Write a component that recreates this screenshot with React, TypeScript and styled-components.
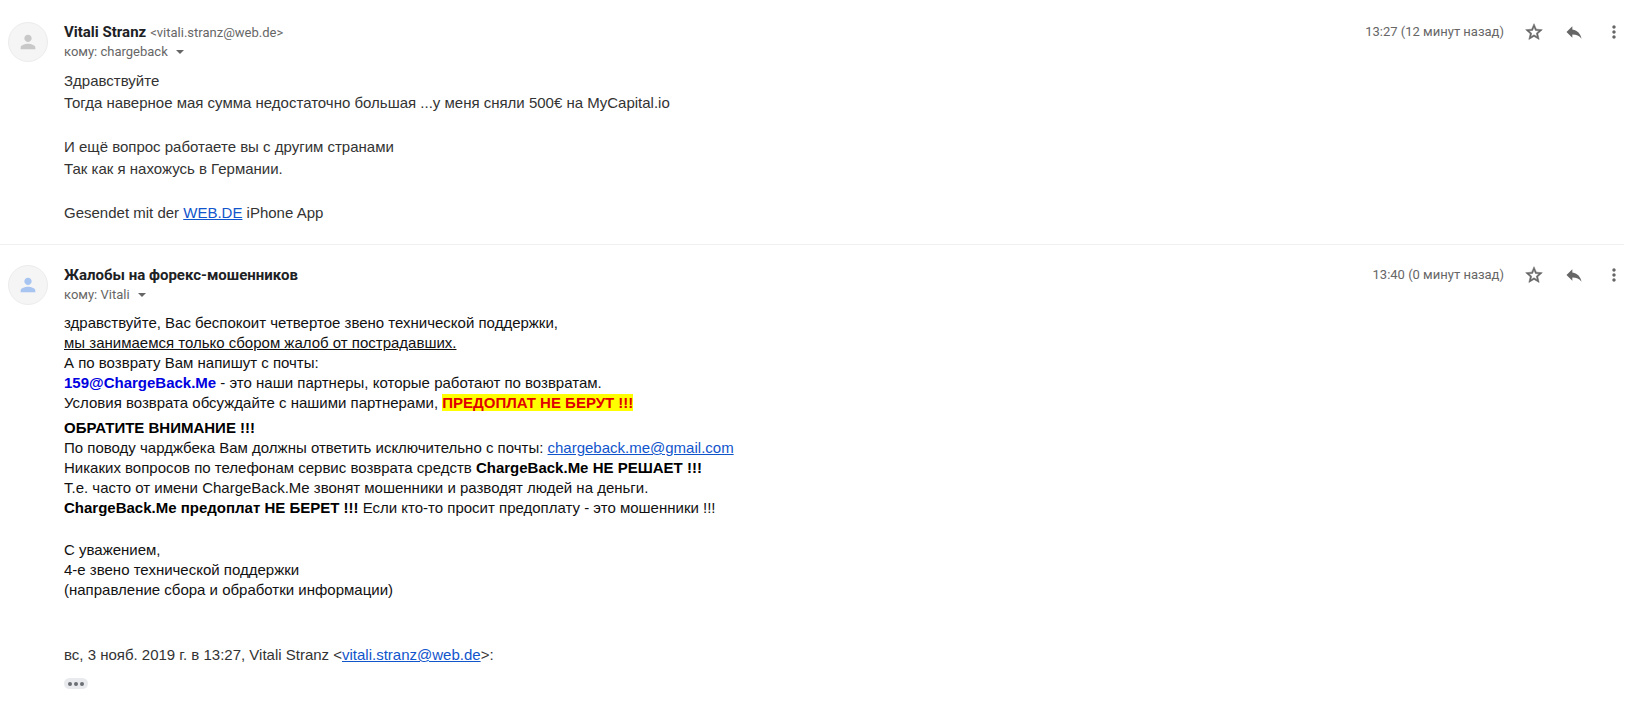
import React from "react";
import styled, { createGlobalStyle } from "styled-components";

const GlobalStyle = createGlobalStyle`
  body {
    margin: 0;
    background: #fff;
    color: #222;
    font-family: "Liberation Sans", Arial, sans-serif;
  }
`;

const Thread = styled.main`
  padding: 2px 10px 0 0;
`;

const MessageCard = styled.article`
  display: flex;
  gap: 16px;
  padding: 20px 0 20px 8px;

  & + & {
    border-top: 1px solid #f0f0f0;
  }
`;

const Avatar = styled.div<{ $tone: string }>`
  flex: none;
  box-sizing: border-box;
  width: 40px;
  height: 40px;
  display: grid;
  place-items: center;
  border: 1px solid #ececec;
  border-radius: 50%;
  background: #f5f5f5;
  color: ${(p) => p.$tone};
`;

const Content = styled.div`
  flex: 1;
  min-width: 0;
`;

const Header = styled.header`
  display: flex;
  justify-content: space-between;
  align-items: flex-start;
  font-family: Roboto, sans-serif;
  font-size: 13px;
  line-height: 20px;
  color: #666;
`;

const Sender = styled.div`
  display: flex;
  align-items: baseline;
  gap: 4px;
  height: 20px;
`;

const SenderName = styled.h3`
  margin: 0;
  font-size: 15px;
  line-height: 20px;
  font-weight: 700;
  color: #202124;
`;

const Recipients = styled.button`
  display: flex;
  align-items: center;
  gap: 8px;
  padding: 0;
  border: 0;
  background: none;
  font: inherit;
  color: inherit;
  cursor: pointer;
`;

const Caret = styled.span`
  border: 4px solid transparent;
  border-top-color: #666;
  border-bottom: 0;
`;

const Meta = styled.div`
  display: flex;
  align-items: center;
  gap: 20px;
`;

const IconButton = styled.button`
  display: flex;
  padding: 0;
  border: 0;
  background: none;
  color: #666;
  cursor: pointer;
`;

const Body = styled.div<{ $line: number; $color: string }>`
  margin-top: 8px;
  font-size: 15px;
  line-height: ${(p) => p.$line}px;
  color: ${(p) => p.$color};
`;

const Paragraph = styled.p<{ $gap?: number }>`
  margin: ${(p) => p.$gap ?? 0}px 0 0;
`;

const MailLink = styled.a`
  color: #15c;
  text-decoration: underline;
`;

const PartnerAddress = styled.strong`
  color: #0000e0;
`;

const Strong = styled.strong`
  color: #000;
`;

const Warning = styled.mark`
  background: #ff0;
  color: #e00000;
  font-weight: 700;
`;

const Quote = styled(Paragraph)`
  color: #333;
`;

const TrimmedToggle = styled.button`
  display: flex;
  align-items: center;
  justify-content: center;
  gap: 2px;
  width: 24px;
  height: 11px;
  margin-top: 13px;
  padding: 0;
  border: 0;
  border-radius: 6px;
  background: #e8eaed;
  cursor: pointer;
`;

const Dot = styled.span`
  width: 4px;
  height: 4px;
  border-radius: 50%;
  background: #6b6e72;
`;

const paths = {
  star: "M22 9.24l-7.19-.62L12 2 9.19 8.63 2 9.24l5.46 4.73L5.82 21 12 17.27 18.18 21l-1.63-7.03L22 9.24zM12 15.4l-3.76 2.27 1-4.28-3.32-2.88 4.38-.38L12 6.1l1.71 4.04 4.38.38-3.32 2.88 1 4.28L12 15.4z",
  reply: "M10 9V5l-7 7 7 7v-4.1c5 0 8.500 1.600 11 5.100-1-5-4-10-11-11z",
  more: "M12 8c1.100 0 2-.9 2-2s-.9-2-2-2-2 .9-2 2 .9 2 2 2zm0 2c-1.100 0-2 .9-2 2s.9 2 2 2 2-.9 2-2-.9-2-2-2zm0 6c-1.100 0-2 .9-2 2s.9 2 2 2 2-.9 2-2-.9-2-2-2z",
  person: "M12 12c2.210 0 4-1.790 4-4s-1.790-4-4-4-4 1.790-4 4 1.790 4 4 4zm0 2c-2.670 0-8 1.340-8 4v2h16v-2c0-2.660-5.330-4-8-4z",
};

interface IconProps {
  name: keyof typeof paths;
  size?: number;
  stroke?: number;
}

function Icon({ name, size = 20, stroke = 0 }: IconProps) {
  return (
    <svg
      width={size}
      height={size}
      viewBox="0 0 24 24"
      fill="currentColor"
      stroke="currentColor"
      strokeWidth={stroke}
      aria-hidden="true"
    >
      <path d={paths[name]} />
    </svg>
  );
}

interface MessageProps {
  sender: string;
  address?: string;
  recipient: string;
  time: string;
  tone: string;
  children: React.ReactNode;
}

function Message({ sender, address, recipient, time, tone, children }: MessageProps) {
  return (
    <MessageCard>
      <Avatar $tone={tone}>
        <Icon name="person" size={22} />
      </Avatar>
      <Content>
        <Header>
          <div>
            <Sender>
              <SenderName>{sender}</SenderName>
              {address && <span>&lt;{address}&gt;</span>}
            </Sender>
            <Recipients type="button">
              кому: {recipient}
              <Caret />
            </Recipients>
          </div>
          <Meta>
            <time>{time}</time>
            <IconButton type="button" aria-label="Пометить">
              <Icon name="star" stroke={0.6} />
            </IconButton>
            <IconButton type="button" aria-label="Ответить">
              <Icon name="reply" />
            </IconButton>
            <IconButton type="button" aria-label="Ещё">
              <Icon name="more" />
            </IconButton>
          </Meta>
        </Header>
        {children}
      </Content>
    </MessageCard>
  );
}

export default function App() {
  return (
    <>
      <GlobalStyle />
      <Thread>
        <Message
          sender="Vitali Stranz"
          address="vitali.stranz@web.de"
          recipient="chargeback"
          time="13:27 (12 минут назад)"
          tone="#c8c8c8"
        >
          <Body $line={22} $color="#333">
            <Paragraph>
              Здравствуйте
              <br />
              Тогда наверное мая сумма недостаточно большая ...у меня сняли 500€ на MyCapital.io
            </Paragraph>
            <Paragraph $gap={22}>
              И ещё вопрос работаете вы с другим странами
              <br />
              Так как я нахожусь в Германии.
            </Paragraph>
            <Paragraph $gap={22}>
              Gesendet mit der <MailLink href="#web-de">WEB.DE</MailLink> iPhone App
            </Paragraph>
          </Body>
        </Message>
        <Message
          sender="Жалобы на форекс-мошенников"
          recipient="Vitali"
          time="13:40 (0 минут назад)"
          tone="#a8c4f0"
        >
          <Body $line={20} $color="#111">
            <Paragraph>
              здравствуйте, Вас беспокоит четвертое звено технической поддержки,
              <br />
              <u>мы занимаемся только сбором жалоб от пострадавших.</u>
              <br />
              А по возврату Вам напишут с почты:
              <br />
              <PartnerAddress>159@ChargeBack.Me</PartnerAddress> - это наши партнеры, которые
              работают по возвратам.
              <br />
              Условия возврата обсуждайте с нашими партнерами,{" "}
              <Warning>ПРЕДОПЛАТ НЕ БЕРУТ !!!</Warning>
            </Paragraph>
            <Paragraph $gap={5}>
              <Strong>ОБРАТИТЕ ВНИМАНИЕ !!!</Strong>
              <br />
              По поводу чарджбека Вам должны ответить исключительно с почты:{" "}
              <MailLink href="mailto:chargeback.me@gmail.com">chargeback.me@gmail.com</MailLink>
              <br />
              Никаких вопросов по телефонам сервис возврата средств{" "}
              <Strong>ChargeBack.Me НЕ РЕШАЕТ !!!</Strong>
              <br />
              Т.е. часто от имени ChargeBack.Me звонят мошенники и разводят людей на деньги.
              <br />
              <Strong>ChargeBack.Me предоплат НЕ БЕРЕТ !!!</Strong> Если кто-то просит предоплату -
              это мошенники !!!
            </Paragraph>
            <Paragraph $gap={22}>
              С уважением,
              <br />
              4-е звено технической поддержки
              <br />
              (направление сбора и обработки информации)
            </Paragraph>
            <Quote $gap={45}>
              вс, 3 нояб. 2019 г. в 13:27, Vitali Stranz &lt;
              <MailLink href="mailto:vitali.stranz@web.de">vitali.stranz@web.de</MailLink>&gt;:
            </Quote>
            <TrimmedToggle type="button" aria-label="Показать скрытый текст">
              <Dot />
              <Dot />
              <Dot />
            </TrimmedToggle>
          </Body>
        </Message>
      </Thread>
    </>
  );
}
